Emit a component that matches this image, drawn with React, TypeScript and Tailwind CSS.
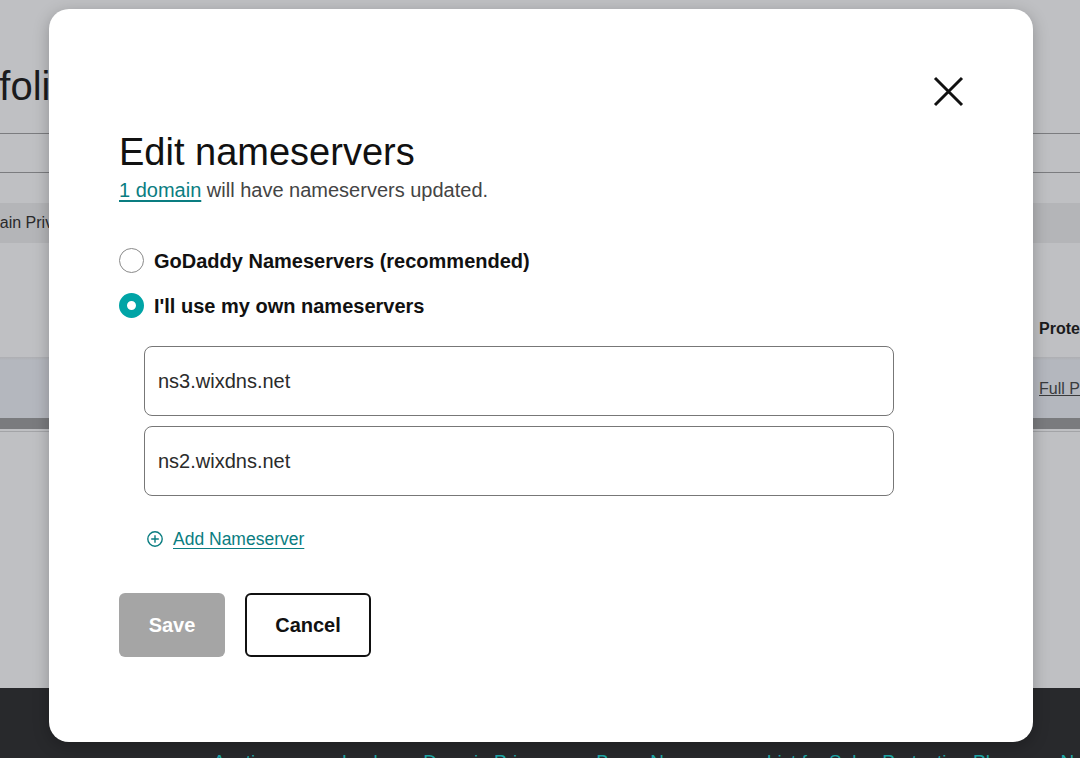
const font = { fontFamily: '"Liberation Sans", Arial, sans-serif' };

const RadioDot = ({ checked }: { checked?: boolean }) =>
  checked ? (
    <span className="box-border block h-[25px] w-[25px] shrink-0 rounded-full border-[8px] border-[#00a4a6] bg-white" />
  ) : (
    <span className="box-border block h-[25px] w-[25px] shrink-0 rounded-full border-[1.5px] border-[#8a8a8a] bg-white" />
  );

const NsInput = ({ value }: { value: string }) => (
  <div className="flex h-[70px] w-[750px] items-center rounded-[8px] border border-[#777777] bg-white pl-[13px] text-[20px] text-[#2b2b2b]">
    {value}
  </div>
);

export default function App() {
  return (
    <div className="relative h-[758px] w-full overflow-hidden bg-[#bfc0c3]" style={font}>
      {/* Page behind the dialog (already dimmed) */}
      <div className="flex h-[688px] flex-col">
        <div className="h-[62px] shrink-0" />
        <div className="ml-[-74px] whitespace-nowrap text-[40px] leading-[48px] text-[#1b1b1c]">Portfolio</div>
        <div className="mt-[23px] h-px bg-[#7b7c7f]" />
        <div className="mt-[38px] h-px bg-[#7b7c7f]" />
        <div className="mt-[30px] flex h-[40px] items-center bg-[#b4b5b8]">
          <span className="ml-[-34px] whitespace-nowrap text-[16px] text-[#2a2a2b]">Domain Privacy</span>
        </div>
        <div className="mt-[57px] flex h-[57px] items-center whitespace-nowrap pl-[1039px] text-[16px] font-bold text-[#1b1b1c]">
          Protection
        </div>
        <div className="h-[3px] bg-gradient-to-b from-[#aeafb2] to-[#b3b6bd]" />
        <div className="flex h-[58px] items-center whitespace-nowrap bg-[#b4b7be] pl-[1039px] text-[16px] text-[#3a3b3d] underline">
          Full Protection
        </div>
        <div className="h-[11px] bg-[#7a7b7e]" />
        <div className="mt-[2px] h-px bg-[#a3a4a7]" />
      </div>
      <div className="flex h-[70px] whitespace-nowrap bg-[#28292c] pt-[62px] text-[19px] leading-[24px] text-[#1ea7a8]">
        <span className="ml-[213px]">Auctions</span>
        <span className="ml-[56px]">Lookup</span>
        <span className="ml-[19px]">Domain Privacy</span>
        <span className="ml-[40px]">Buy a Name</span>
        <span className="ml-[66px]">List for Sale</span>
        <span className="ml-[15px]">Protection Plans</span>
        <span className="ml-[40px]">Nameservers</span>
      </div>

      {/* Dialog */}
      <div className="absolute left-[49px] top-[9px] h-[733px] w-[984px] rounded-[20px] bg-white shadow-[0_4px_16px_rgba(0,0,0,0.25)]">
        <button className="absolute right-[69px] top-[67px] flex h-[31px] w-[31px] items-center justify-center" aria-label="Close">
          <svg width="31" height="31" viewBox="0 0 31 31" fill="none" stroke="#111111" strokeWidth="3">
            <path d="M2 2L29 29M29 2L2 29" />
          </svg>
        </button>

        <div className="flex flex-col pl-[70px] pt-[121px]">
          <h1 className="text-[38px] leading-[44px] text-[#111111]">Edit nameservers</h1>
          <p className="mt-[4px] text-[20px] leading-[24px] text-[#444444]">
            <a className="text-[#0a7d81] underline underline-offset-[3px]">1 domain</a> will have nameservers updated.
          </p>

          <div className="mt-[46px] flex flex-col gap-[20px]">
            <label className="flex h-[25px] items-center gap-[10px] text-[20px] font-bold text-[#111111]">
              <RadioDot />
              GoDaddy Nameservers (recommended)
            </label>
            <label className="flex h-[25px] items-center gap-[10px] text-[20px] font-bold text-[#111111]">
              <RadioDot checked />
              I'll use my own nameservers
            </label>
          </div>

          <div className="ml-[25px] mt-[28px] flex flex-col gap-[10px]">
            <NsInput value="ns3.wixdns.net" />
            <NsInput value="ns2.wixdns.net" />
          </div>

          <div className="ml-[28px] mt-[30px] flex items-center gap-[10px] text-[17.5px] text-[#0a7d81]">
            <svg width="16" height="16" viewBox="0 0 16 16" fill="none" stroke="#0a7d81" strokeWidth="1.4">
              <circle cx="8" cy="8" r="7.2" />
              <path d="M8 4.2V11.8M4.2 8H11.8" />
            </svg>
            <span className="underline underline-offset-[3px]">Add Nameserver</span>
          </div>

          <div className="mt-[41px] flex gap-[20px]">
            <button className="h-[64px] w-[106px] rounded-[6px] bg-[#a5a5a5] text-[20px] font-bold text-white">Save</button>
            <button className="h-[64px] w-[126px] rounded-[6px] border-2 border-[#111111] bg-white text-[20px] font-bold text-[#111111]">
              Cancel
            </button>
          </div>
        </div>
      </div>
    </div>
  );
}
